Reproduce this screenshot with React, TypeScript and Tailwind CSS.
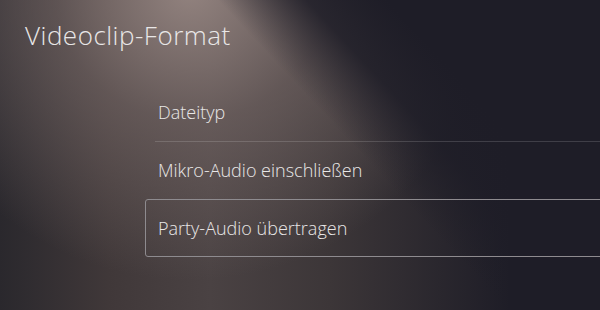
import * as React from 'react';

const items = [
  { label: 'Dateityp', divider: true },
  { label: 'Mikro-Audio einschließen', divider: false },
  { label: 'Party-Audio übertragen', divider: false, focused: true }
];

export default function App() {
  return (
    <div
      className="relative h-[310px] w-[600px] overflow-hidden bg-[linear-gradient(47deg,rgba(30,29,39,0)_57%,rgba(30,29,39,0.85)_67%,rgba(30,29,39,1)_76%),radial-gradient(ellipse_300px_290px_at_190px_-10px,rgba(150,134,130,0.95)_0%,rgba(120,106,104,0.6)_45%,rgba(100,90,90,0)_100%),linear-gradient(90deg,#2a282d_0%,#403839_18%,#4a4243_35%,#3c3638_55%,#1e1d27_85%)] font-['Open_Sans','Liberation_Sans',sans-serif] text-[#e9e7e7]"
    >
      <h1 className="pl-[25px] pt-[18px] text-[26px] font-light leading-[34px] tracking-[0.5px]">
        Videoclip-Format
      </h1>

      <div className="ml-[145px] mt-[32px] w-[480px]">
        {items.map((item) => (
          <div key={item.label}>
            <div
              className={
                item.focused
                  ? 'flex h-[58px] items-center rounded-[3px] border-[1.5px] border-[#8e8b8f] px-[12px] text-[18px] font-light'
                  : 'flex h-[57px] items-center px-[13px] text-[18px] font-light'
              }
            >
              {item.label}
            </div>
            {item.divider ? <div className="ml-[10px] h-px bg-white/15" /> : null}
          </div>
        ))}
      </div>
    </div>
  );
}
